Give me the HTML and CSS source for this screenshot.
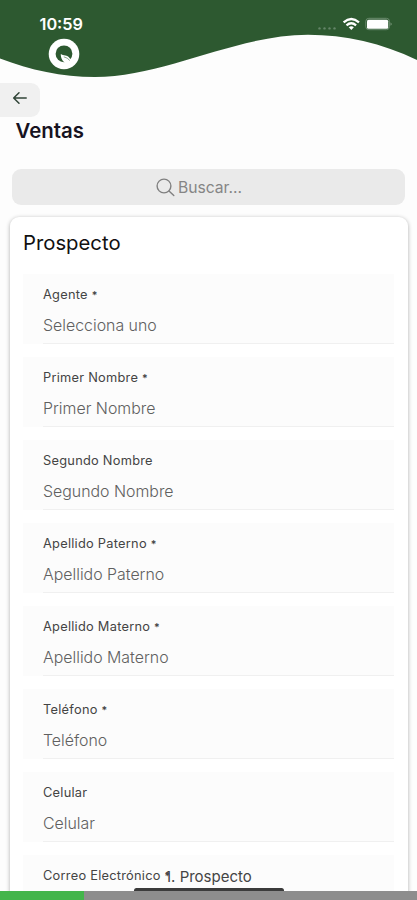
FILE: index.html
```html
<!DOCTYPE html>
<html lang="es">
<head>
<meta charset="utf-8">
<title>Ventas</title>
<link rel="stylesheet" href="styles.css">
</head>
<body>
<div class="screen">
  <header class="header">
    <svg class="wave" width="417" height="80" viewBox="0 0 417 80"><path fill="#2d5930" d="M0 0H417V60C382 43 345 34.7 308 34.7C236 34.7 164 77 95 77C62 77 30 70 0 58.5Z"/></svg>
    <div class="status">
      <span class="time">10:59</span>
      <svg class="signals" width="76" height="16" viewBox="0 0 76 16">
        <g fill="#658568"><circle cx="3.5" cy="12.4" r="1.2"/><circle cx="8.5" cy="12.4" r="1.2"/><circle cx="13.5" cy="12.4" r="1.2"/><circle cx="18.5" cy="12.4" r="1.2"/></g>
        <g transform="translate(1 0)"><g fill="none" stroke="#fff" stroke-width="2.3"><path d="M26.6 6.3Q34.3-.3 42 6.3"/><path d="M29.5 9.3Q34.3 5.3 39.1 9.3"/></g>
        <path fill="#fff" d="M31.7 11.2Q34.3 9.2 36.9 11.2L34.3 14Z"/></g>
        <rect x="49.8" y="2.3" width="23.6" height="11.4" rx="3" fill="none" stroke="#6b8b6e"/>
        <rect x="51" y="3.8" width="21.2" height="9" rx="1.5" fill="#fff"/>
        <path d="M74.6 6.2Q76.5 8 74.6 9.8Z" fill="#91aa92"/>
      </svg>
    </div>
    <svg class="logo" width="32" height="32" viewBox="0 0 32 32">
      <circle cx="16" cy="16" r="15.3" fill="#fff"/>
      <circle cx="16" cy="15.8" r="8.4" fill="#2d5930"/>
      <path d="M12.8 16C15 18 19.8 16.8 21.5 20L24.5 23.5L20 25.5C15 25 12.6 20.5 12.8 16Z" fill="#fff"/>
      <path d="M15.8 18.8Q19.5 19.6 21.8 22.5" fill="none" stroke="#8aa58b" stroke-width="1"/>
    </svg>
  </header>
  <div class="back"><svg width="16" height="14" viewBox="0 0 16 14" fill="none" stroke="#304437" stroke-width="1.5" stroke-linecap="round" stroke-linejoin="round"><path d="M14.2 7H1.8M7 1.7L1.7 7L7 12.3"/></svg></div>
  <h1 class="title">Ventas</h1>
  <div class="search">
    <svg width="19" height="19" viewBox="0 0 19 19" fill="none" stroke="#808080" stroke-width="1.4" stroke-linecap="round"><circle cx="8" cy="8" r="6.9"/><path d="M13 13L17.8 17.5"/></svg>
    <span class="search-text">Buscar...</span>
  </div>
  <main class="card">
    <h2 class="card-title">Prospecto</h2>
    <div class="fields">
      <div class="field"><div class="label">Agente <span class="req">*</span></div><div class="value">Selecciona uno</div></div>
      <div class="field"><div class="label">Primer Nombre <span class="req">*</span></div><div class="value">Primer Nombre</div></div>
      <div class="field"><div class="label">Segundo Nombre</div><div class="value">Segundo Nombre</div></div>
      <div class="field"><div class="label">Apellido Paterno <span class="req">*</span></div><div class="value">Apellido Paterno</div></div>
      <div class="field"><div class="label">Apellido Materno <span class="req">*</span></div><div class="value">Apellido Materno</div></div>
      <div class="field"><div class="label">Teléfono <span class="req">*</span></div><div class="value">Teléfono</div></div>
      <div class="field"><div class="label">Celular</div><div class="value">Celular</div></div>
      <div class="field"><div class="label">Correo Electrónico <span class="req">*</span></div></div>
    </div>
  </main>
  <div class="step">1. Prospecto</div>
  <div class="home"></div>
  <div class="progress"><div class="progress-fill"></div></div>
</div>
</body>
</html>
```
FILE: styles.css
```css
* { box-sizing: border-box; }
body { margin: 0; background: #fdfdfd; font-family: Inter, "Liberation Sans", sans-serif; }
.screen { position: relative; width: 417px; height: 900px; overflow: hidden; display: flex; flex-direction: column; }
.header { position: relative; height: 83px; flex: none; }
.wave { position: absolute; left: 0; top: 0; }
.status { position: relative; display: flex; justify-content: space-between; padding: 16px 25px 0 39.5px; height: 38px; }
.time { color: #fff; font-size: 16.3px; font-weight: 600; line-height: 17px; white-space: nowrap; }
.signals { flex: none; }
.logo { position: relative; display: block; margin-left: 48px; }
.back { flex: none; width: 40px; height: 34px; background: #f0f0f0; border-radius: 0 9px 9px 0; padding: 8px 0 0 12px; }
.back svg { display: block; }
.title { flex: none; margin: 1px 0 0 15.5px; font-size: 20.4px; line-height: 25px; font-weight: 600; color: #17131f; }
.search { flex: none; margin: 26px 12px 0; height: 36px; border-radius: 9px; background: #eaeaea; display: flex; align-items: center; justify-content: center; gap: 3px; padding-right: 19px; }
.search-text { font-size: 15.7px; color: #858585; }
.card { flex: 1; min-height: 0; margin: 12px 9px 0 10px; background: #fff; border-radius: 9px 9px 0 0; box-shadow: 0 1px 4px rgba(0,0,0,.32); padding: 14px 14px 0 13px; }
.card-title { margin: 0 0 19px; font-size: 20.3px; line-height: 24px; font-weight: 400; color: #111; }
.fields { display: flex; flex-direction: column; gap: 13px; }
.field { height: 70px; flex: none; background: #fcfcfc; padding: 13px 0 0 20px; display: flex; flex-direction: column; }
.label { font-size: 12.8px; line-height: 16px; color: #444; white-space: nowrap; letter-spacing: .26px; }
.req { font-size: 10.5px; font-weight: 600; line-height: 1; }
.value { flex: 1; padding-top: 11px; border-bottom: 1.5px solid #f0f0f0; font-size: 15.9px; font-weight: 300; line-height: 24px; color: #606060; white-space: nowrap; }
.step { position: absolute; left: 165px; top: 867px; font-size: 15px; line-height: 20px; color: #444; white-space: nowrap; }
.home { position: absolute; left: 134px; top: 888px; width: 150px; height: 5px; border-radius: 4px; background: #3b3b3b; }
.progress { position: absolute; left: 0; top: 891px; width: 417px; height: 9px; background: #8d8d8d; }
.progress-fill { width: 84px; height: 9px; background: #43b54b; }
```
